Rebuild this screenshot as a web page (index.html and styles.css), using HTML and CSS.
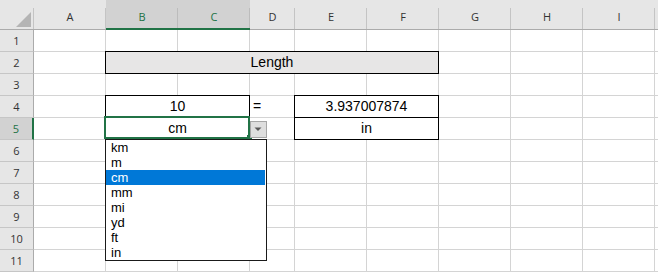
FILE: index.html
```html
<!DOCTYPE html>
<html>

<head>
  <meta charset="UTF-8">
  <meta name="viewport" content="width=device-width, initial-scale=1">
  <title>Length converter</title>
  <link rel="stylesheet" href="styles.css">
</head>

<body>
  <div class="sheet">
    <div class="row hd">
      <div class="corner">
        <svg width="33" height="29" viewBox="0 0 33 29"><polygon points="31,12 31,27 16,27" fill="#b4b4b4"/></svg>
      </div>
      <div class="ch">A</div>
      <div class="ch sel">B</div>
      <div class="ch sel">C</div>
      <div class="ch d">D</div>
      <div class="ch">E</div>
      <div class="ch">F</div>
      <div class="ch">G</div>
      <div class="ch">H</div>
      <div class="ch">I</div>
      <div class="ch j"></div>
    </div>
    <div class="row">
      <div class="rh">1</div>
      <div class="cell"></div><div class="cell"></div><div class="cell"></div><div class="cell d"></div>
      <div class="cell"></div><div class="cell"></div><div class="cell"></div><div class="cell"></div><div class="cell"></div>
      <div class="cell j"></div>
    </div>
    <div class="row">
      <div class="rh">2</div>
      <div class="cell"></div>
      <div class="box span5 shade">Length</div>
      <div class="cell"></div><div class="cell"></div><div class="cell"></div>
      <div class="cell j"></div>
    </div>
    <div class="row">
      <div class="rh">3</div>
      <div class="cell"></div><div class="cell"></div><div class="cell"></div><div class="cell d"></div>
      <div class="cell"></div><div class="cell"></div><div class="cell"></div><div class="cell"></div><div class="cell"></div>
      <div class="cell j"></div>
    </div>
    <div class="row">
      <div class="rh">4</div>
      <div class="cell"></div>
      <div class="box span2">10</div>
      <div class="cell d eq">=</div>
      <div class="box span2">3.937007874</div>
      <div class="cell"></div><div class="cell"></div><div class="cell"></div>
      <div class="cell j"></div>
    </div>
    <div class="row">
      <div class="rh sel">5</div>
      <div class="cell"></div>
      <div class="box span2">cm</div>
      <div class="cell d"></div>
      <div class="box span2">in</div>
      <div class="cell"></div><div class="cell"></div><div class="cell"></div>
      <div class="cell j"></div>
    </div>
    <div class="row">
      <div class="rh">6</div>
      <div class="cell"></div><div class="cell"></div><div class="cell"></div><div class="cell d"></div>
      <div class="cell"></div><div class="cell"></div><div class="cell"></div><div class="cell"></div><div class="cell"></div>
      <div class="cell j"></div>
    </div>
    <div class="row">
      <div class="rh">7</div>
      <div class="cell"></div><div class="cell"></div><div class="cell"></div><div class="cell d"></div>
      <div class="cell"></div><div class="cell"></div><div class="cell"></div><div class="cell"></div><div class="cell"></div>
      <div class="cell j"></div>
    </div>
    <div class="row">
      <div class="rh">8</div>
      <div class="cell"></div><div class="cell"></div><div class="cell"></div><div class="cell d"></div>
      <div class="cell"></div><div class="cell"></div><div class="cell"></div><div class="cell"></div><div class="cell"></div>
      <div class="cell j"></div>
    </div>
    <div class="row">
      <div class="rh">9</div>
      <div class="cell"></div><div class="cell"></div><div class="cell"></div><div class="cell d"></div>
      <div class="cell"></div><div class="cell"></div><div class="cell"></div><div class="cell"></div><div class="cell"></div>
      <div class="cell j"></div>
    </div>
    <div class="row">
      <div class="rh">10</div>
      <div class="cell"></div><div class="cell"></div><div class="cell"></div><div class="cell d"></div>
      <div class="cell"></div><div class="cell"></div><div class="cell"></div><div class="cell"></div><div class="cell"></div>
      <div class="cell j"></div>
    </div>
    <div class="row">
      <div class="rh">11</div>
      <div class="cell"></div><div class="cell"></div><div class="cell"></div><div class="cell d"></div>
      <div class="cell"></div><div class="cell"></div><div class="cell"></div><div class="cell"></div><div class="cell"></div>
      <div class="cell j"></div>
    </div>

    <!-- active cell B5 with its validation list open -->
    <div class="selection"><div class="handle"></div></div>
    <div class="dd-btn">
      <svg width="15" height="15" viewBox="0 0 15 15"><polygon points="3.5,5.5 10.5,5.5 7,9" fill="#595959"/></svg>
    </div>
    <ul class="dd-list">
      <li>km</li>
      <li>m</li>
      <li class="on">cm</li>
      <li>mm</li>
      <li>mi</li>
      <li>yd</li>
      <li>ft</li>
      <li>in</li>
    </ul>
  </div>
</body>

</html>
```

FILE: styles.css
```css
body {
  margin: 0;
  background-color: #fff;
  overflow: hidden;
}

.sheet {
  position: relative;
  width: 658px;
  font-family: "Liberation Sans", Arial, sans-serif;
  font-size: 14px;
  color: #000;
}

.row {
  display: flex;
  height: 22px;
}

.row > div {
  flex: none;
  box-sizing: border-box;
}

.hd {
  height: 30px;
}

/* column headers */
.corner, .ch {
  height: 30px;
  border-bottom: 1px solid #ababab;
  background: linear-gradient(#c4c4c4, #c4c4c4) right bottom / 1px 21px no-repeat, #e6e6e6;
}

.corner {
  width: 34px;
}

.corner svg {
  display: block;
}

.ch {
  width: 72px;
  padding-top: 3px;
  font-family: "Open Sans", sans-serif;
  font-size: 11px;
  line-height: 27px;
  text-align: center;
  color: #333;
}

.ch.d {
  width: 45px;
}

.row > .ch.j {
  flex: 1;
  background: #e6e6e6;
}

.ch.sel {
  border-bottom: 2px solid #217346;
  background: linear-gradient(#bcbcbc, #bcbcbc) right bottom / 1px 20px no-repeat, #d2d2d2;
  color: #217346;
}

/* row headers */
.rh {
  width: 34px;
  height: 22px;
  border-right: 1px solid #ababab;
  border-bottom: 1px solid #c6c6c6;
  background-color: #e6e6e6;
  font-family: "Open Sans", sans-serif;
  font-size: 11px;
  line-height: 22px;
  text-align: center;
  color: #333;
}

.rh.sel {
  border-right: 2px solid #217346;
  background-color: #d2d2d2;
  color: #217346;
}

/* cells */
.cell {
  width: 72px;
  height: 22px;
  border-right: 1px solid #d4d4d4;
  border-bottom: 1px solid #d4d4d4;
  line-height: 20px;
}

.cell.d {
  width: 45px;
}

.row > .cell.j {
  flex: 1;
  border-right: 0;
}

.eq {
  padding-left: 3px;
}

.box {
  height: 23px;
  margin: -1px 0 0 -1px;
  border: 1px solid #000;
  line-height: 20px;
  text-align: center;
}

.span2 {
  width: 145px;
}

.span5 {
  width: 334px;
}

.shade {
  background-color: #e7e6e6;
}

/* selection + dropdown */
.selection {
  position: absolute;
  left: 104px;
  top: 116px;
  width: 146px;
  height: 23px;
  box-sizing: border-box;
  border: 2px solid #217346;
}

.handle {
  position: absolute;
  right: -4px;
  bottom: -3px;
  width: 5px;
  height: 5px;
  background-color: #217346;
}

.dd-btn {
  position: absolute;
  left: 250px;
  top: 121px;
  width: 17px;
  height: 17px;
  box-sizing: border-box;
  border: 1px solid #a6a6a6;
  background-color: #dedede;
}

.dd-btn svg {
  display: block;
}

.dd-list {
  position: absolute;
  left: 105px;
  top: 139px;
  width: 162px;
  height: 122px;
  box-sizing: border-box;
  margin: 0;
  padding: 0 1px 0 0;
  list-style: none;
  border: 1px solid #1a1a1a;
  background-color: #fff;
  font-family: "Liberation Sans", Arial, sans-serif;
  font-size: 13px;
  line-height: 15px;
}

.dd-list li {
  height: 15px;
  padding-left: 5px;
}

.dd-list .on {
  background-color: #0078d7;
  color: #fff;
}
```
